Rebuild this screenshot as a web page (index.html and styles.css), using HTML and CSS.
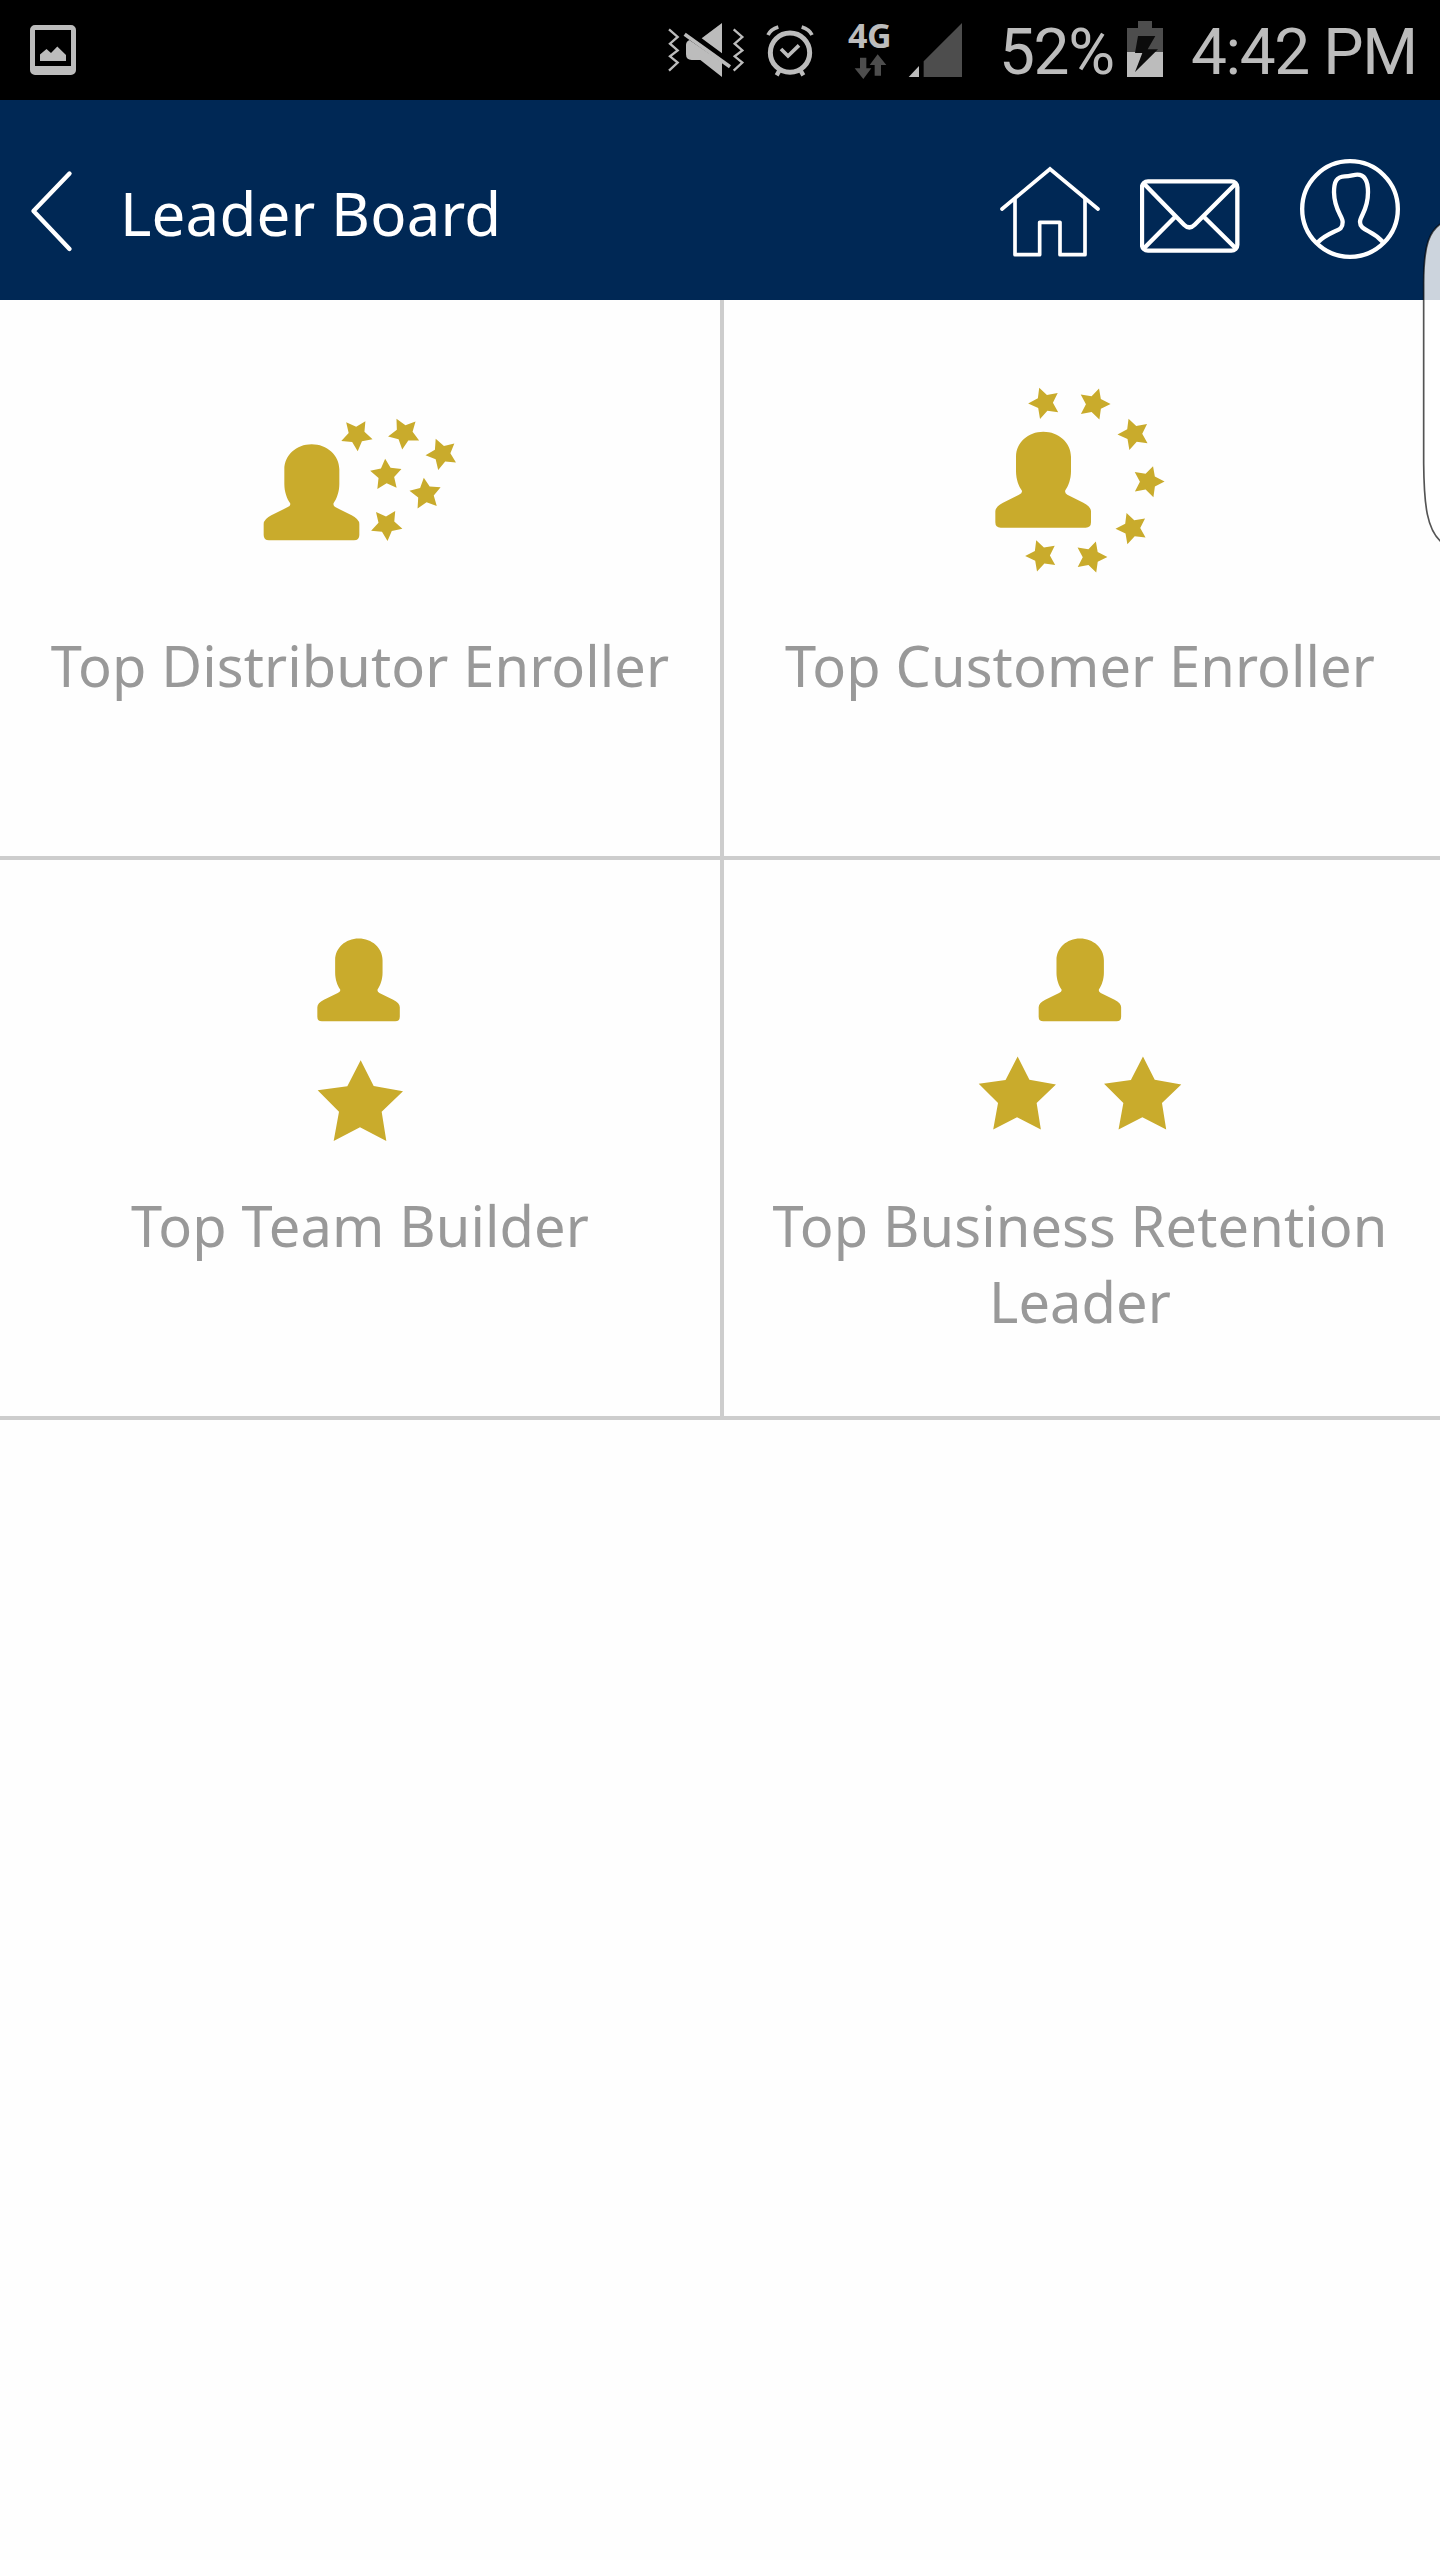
FILE: index.html
```html
<!DOCTYPE html>
<html lang="en">
<head>
    <meta charset="UTF-8">
    <meta name="viewport" content="width=device-width, initial-scale=1.0">
    <title>Leader Board</title>
    <link rel="stylesheet" href="styles.css">
</head>
<body>
    <!-- shared shapes -->
    <svg class="shapes" width="0" height="0">
        <defs>
            <path id="person" d="M144 1C190 1 227 34 227 76V120C227 143 219 165 210 177Q207 184 216 190L264 214Q287 226 287 240V273Q287 289 271 289H16Q0 289 0 273V240Q0 226 23 214L71 190Q83 184 79 177C70 165 62 143 62 120V76C62 34 98 1 144 1Z"/>
            <path id="star" d="M1 -133L40 -56L128 -40L64 21L78 109L-1 68L-80 109L-64 21L-128 -43L-39 -55Z"/>
        </defs>
    </svg>

    <div class="statusBar">
        <svg class="picture" viewBox="30 0 46 100">
            <rect x="32.5" y="27.5" width="41" height="45" rx="2.5" fill="none" stroke="#bcbcbc" stroke-width="5"/>
            <path d="M32 66H74V72H32ZM40 61V54.5L46.5 49L51 53L57.3 46.5L66 55V61Z" fill="#bcbcbc"/>
        </svg>

        <div class="statusIcons">
            <svg class="mute" viewBox="30 0 300 300">
                <path d="M57 88L83 111L60 131L83 151L60 169L83 188L57 212M251 88L277 111L254 131L277 151L254 169L277 188L251 212" fill="none" stroke="#bcbcbc" stroke-width="7"/>
                <path d="M216 69V160L155 115ZM118 120L216 187V231L151 180H125Q108 180 108 163V135Q108 125 118 120Z" fill="#bcbcbc"/>
                <path d="M104 103L240 200" stroke="#bcbcbc" stroke-width="11"/>
            </svg>
            <svg class="alarm" viewBox="330 0 180 300">
                <g fill="none" stroke="#bcbcbc">
                    <circle cx="420" cy="158" r="59" stroke-width="15"/>
                    <path d="M393 147L414 168L447 136" stroke-width="11"/>
                    <path d="M354 105Q362 88 385 81M486 105Q478 88 455 81" stroke-width="11"/>
                    <path d="M388 212L380 226M452 212L460 226" stroke-width="13"/>
                </g>
            </svg>
            <div class="network">
                <span>4G</span>
                <svg viewBox="594 156 126 84">
                    <path d="M630 173H649V205H664L640 237L614 205H630ZM674 227H693V195H709L683 163L659 195H674Z" fill="#4d4d4d"/>
                </svg>
            </div>
            <svg class="signal" viewBox="750 0 210 300">
                <path d="M776 231L807 198V231Z" fill="#bcbcbc"/>
                <path d="M821 231V184L936 69V231Z" fill="#4d4d4d"/>
            </svg>
            <span class="percent">52%</span>
            <svg class="battery" viewBox="441 0 108 300">
                <path d="M474 63H516V84H549V156H441V84H474Z" fill="#4d4d4d"/>
                <path d="M441 156H549V231H441Z" fill="#bcbcbc"/>
                <path d="M474 108H526L503 148H534L465 216L487 159H465Z" fill="#0c0c0c"/>
            </svg>
            <span class="clock">4:42 PM</span>
        </div>
    </div>

    <header>
        <svg class="back" viewBox="30 0 43 200">
            <path d="M69.5 73.5L33.5 111L69.5 149" fill="none" stroke="#fff" stroke-width="4.4" stroke-linecap="round" stroke-linejoin="round"/>
        </svg>
        <h1>Leader Board</h1>
        <nav>
            <svg class="home" viewBox="60 -120 300 600">
                <g fill="none" stroke="#fff" stroke-width="11">
                    <path d="M66 207L210 87L354 207" stroke-linecap="round"/>
                    <path d="M105 176V344H179V247H240V344H315V176" stroke-linejoin="round"/>
                </g>
            </svg>
            <svg class="mail" viewBox="480 -120 300 600">
                <g fill="none" stroke="#fff" stroke-width="13">
                    <rect x="486" y="124" width="286" height="208" rx="18"/>
                    <path d="M492 131L612 254Q628 270 644 254L767 131M492 325L585 231M767 325L672 231"/>
                </g>
            </svg>
            <svg class="user" viewBox="960 -120 300 600">
                <g fill="none" stroke="#fff" stroke-width="13">
                    <circle cx="1110" cy="207" r="143.500"/>
                    <path d="M1012 308C1026 293 1040 285 1062 275C1082 267 1088 263 1088 246C1088 227 1063 212 1062 157C1062 124 1070 110 1094 109C1112 109 1120 104 1132 104C1156 104 1164 128 1164 157C1164 212 1140 227 1140 246C1140 260 1150 266 1166 274C1186 284 1196 292 1211 308"/>
                </g>
            </svg>
        </nav>
    </header>

    <div class="board">
        <div class="item">
            <svg viewBox="0 -120 720 780">
                <use href="#person" x="71" y="162"/>
                <use href="#star" transform="translate(350 135) rotate(32) scale(.367)"/>
                <use href="#star" transform="translate(493 130) rotate(43) scale(.367)"/>
                <use href="#star" transform="translate(606 192) rotate(49) scale(.367)"/>
                <use href="#star" transform="translate(438.500 255) rotate(-4) scale(.367)"/>
                <use href="#star" transform="translate(557 312) rotate(-7) scale(.367)"/>
                <use href="#star" transform="translate(439.500 404) rotate(32) scale(.367)"/>
            </svg>
            <div class="name">Top Distributor Enroller</div>
        </div>
        <div class="item">
            <svg viewBox="-30 -60 720 780">
                <use href="#person" x="76" y="184"/>
                <use href="#star" transform="translate(224 99) rotate(-20) scale(.367)"/>
                <use href="#star" transform="translate(372.500 102) rotate(17) scale(.367)"/>
                <use href="#star" transform="translate(492 192) rotate(-20) scale(.367)"/>
                <use href="#star" transform="translate(534.500 335) rotate(17) scale(.367)"/>
                <use href="#star" transform="translate(486 475) rotate(-20) scale(.367)"/>
                <use href="#star" transform="translate(215 557) rotate(-20) scale(.367)"/>
                <use href="#star" transform="translate(363 561) rotate(17) scale(.367)"/>
            </svg>
            <div class="name">Top Customer Enroller</div>
        </div>
        <div class="item">
            <svg viewBox="-150 -30 720 780">
                <use href="#person" transform="translate(82 55) scale(.862)"/>
                <use href="#star" transform="translate(211 554)"/>
            </svg>
            <div class="name">Top Team Builder</div>
        </div>
        <div class="item">
            <svg viewBox="0 -30 720 780">
                <use href="#person" transform="translate(236 55) scale(.862)"/>
                <use href="#star" transform="translate(172 530) scale(.905)"/>
                <use href="#star" transform="translate(548 530) scale(.905)"/>
            </svg>
            <div class="name">Top Business Retention Leader</div>
        </div>
    </div>

    <!-- edge panel handle, floats over the page -->
    <svg class="edgePanel" viewBox="120 0 60 1080">
        <path d="M184 70C150 92 131 130 131 250V790C132 920 142 990 184 1026" fill="#fff" fill-opacity=".8" stroke="#000" stroke-opacity=".67" stroke-width="5"/>
    </svg>
</body>
</html>
```
FILE: styles.css
```css
*{
    margin: 0;
    padding: 0;
    box-sizing: border-box;
}
body{
    position: relative;
    min-height: 2560px;
    background-color: #fefefe;
    font-family: "Noto Sans", sans-serif;
    overflow-x: hidden;
}
svg{
    display: block;
    flex-shrink: 0;
}
.shapes{
    position: absolute;
}

/* status bar */
.statusBar{
    display: flex;
    justify-content: space-between;
    height: 100px;
    padding: 0 23px 0 30px;
    background-color: #000;
    color: #bcbcbc;
}
.statusBar svg{
    height: 100px;
}
.picture{
    width: 46px;
}
.statusIcons{
    display: flex;
}
.mute{
    width: 100px;
}
.alarm{
    width: 60px;
}
.network{
    width: 42px;
    margin: 0 10px 0 28px;
}
.network span{
    display: block;
    height: 52px;
    padding-top: 11px;
    font-size: 34px;
    line-height: 48px;
    font-weight: bold;
    letter-spacing: -0.5px;
}
.statusBar .network svg{
    width: 42px;
    height: 28px;
}
.signal{
    width: 70px;
}
.percent,
.clock{
    font-family: Roboto, sans-serif;
    font-size: 64px;
    line-height: 106px;
    letter-spacing: -1.4px;
    white-space: nowrap;
}
.percent{
    width: 157px;
    padding-left: 29px;
}
.battery{
    width: 36px;
    margin-right: 28px;
}
.clock{
    width: 226px;
}

/* header */
header{
    display: flex;
    align-items: center;
    height: 200px;
    padding: 0 40px 0 30px;
    background-color: #002855;
    color: #fff;
}
.back{
    width: 43px;
    height: 200px;
}
header h1{
    margin-left: 47px;
    padding-top: 26px;
    font-size: 60px;
    line-height: 82px;
    font-weight: normal;
    letter-spacing: 0.15px;
}
nav{
    display: flex;
    margin-left: auto;
}
nav svg{
    width: 100px;
    height: 200px;
}
.mail{
    margin: 0 60px 0 40px;
}

/* leader board grid */
.board{
    display: grid;
    grid-template-columns: repeat(2,1fr);
}
.item{
    display: flex;
    flex-direction: column;
    align-items: center;
    height: 560px;
    padding: 50px 30px 0;
    border-bottom: 4px solid #cdcdcd;
}
.item:nth-child(even){
    box-shadow: inset 4px 0 #cdcdcd;
}
.item svg{
    width: 240px;
    height: 260px;
    fill: #c9ab2c;
}
.item .name{
    margin-top: 17px;
    font-size: 56px;
    line-height: 76px;
    letter-spacing: 0.1px;
    text-align: center;
    color: #999;
}

.edgePanel{
    position: absolute;
    top: 200px;
    right: 0;
    width: 20px;
    height: 360px;
}
```
